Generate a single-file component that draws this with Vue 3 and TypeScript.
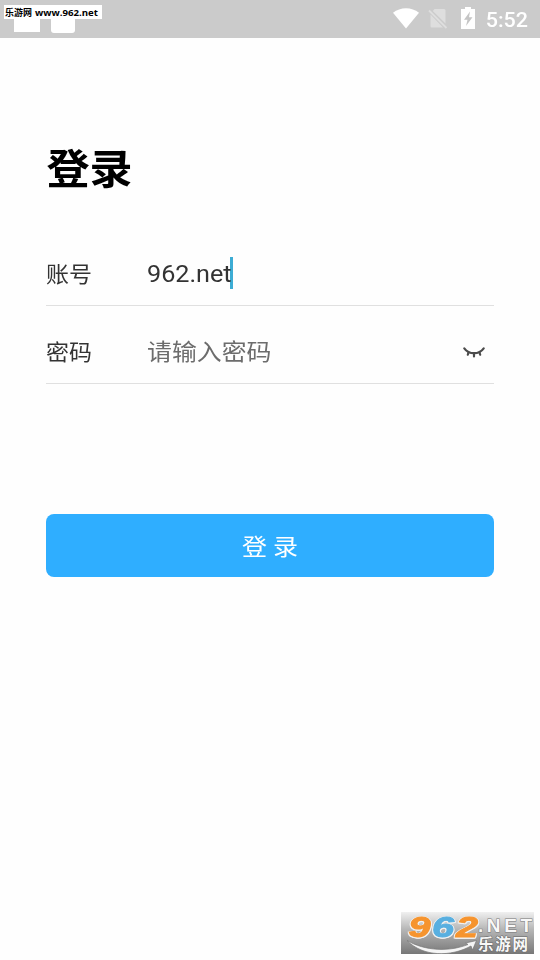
<script setup lang="ts">
import { ref } from 'vue'

const account = ref<string>('962.net')
const time = '5:52'
</script>

<template>
  <div class="screen">
    <header class="status">
      <div class="notices">
        <i class="notice"></i>
        <i class="notice second"></i>
        <span class="source">
          <svg width="98" height="14" viewBox="0 0 98 14">
            <text class="source-cn" x="1" y="11" textLength="27" lengthAdjust="spacingAndGlyphs">乐游网</text>
            <text class="source-url" x="31" y="11" textLength="63" lengthAdjust="spacingAndGlyphs">www.962.net</text>
          </svg>
        </span>
      </div>
      <div class="system">
        <svg class="wifi" width="26" height="21" viewBox="0 0 26 21">
          <path d="M0 4.800C3.800 1.700 8.200 .2 13 .2s9.200 1.500 13 4.600L13 20.600z" fill="#fff" />
        </svg>
        <svg class="sim" width="20" height="21" viewBox="0 0 20 21">
          <path d="M6.500 1H16q1.500 0 1.500 1.500V15.500L4.800 3zM2.500 6.500 15 19.500H4q-1.500 0-1.500-1.500z" fill="#dedede" />
          <path d="M1 2.500 18.500 20" stroke="#dedede" stroke-width="1.800" />
        </svg>
        <svg class="battery" width="14" height="22" viewBox="0 0 14 22">
          <path d="M4 0h6v2h4v20H0V2h4z" fill="#fff" />
          <path d="M9 4.500 3 12.700h3.500L5 19l6.500-8.700H8z" fill="#c5c5c5" />
        </svg>
        <span class="clock">{{ time }}</span>
      </div>
    </header>

    <main class="login">
      <h1>登录</h1>
      <div class="field">
        <span class="label">账号</span>
        <span class="value">{{ account }}</span>
        <i class="caret"></i>
      </div>
      <div class="field">
        <span class="label">密码</span>
        <span class="placeholder">请输入密码</span>
        <svg class="eye" width="22" height="12" viewBox="0 0 22 12" fill="none" stroke="#4b4b4b" stroke-linecap="round">
          <path d="M1.300 2.300C6 8.800 16 8.800 20.700 2.300" stroke-width="2.200" />
          <path d="M5.500 6.500 4.800 8.800M11 7.500v3M16.500 6.500l.7 2.300" stroke-width="2.200" />
        </svg>
      </div>
      <button class="submit" type="button"><span>登 录</span></button>
    </main>

    <footer class="brand">
      <svg width="133" height="42" viewBox="0 0 133 42">
        <defs>
          <linearGradient id="brand-bg" x1="0" y1="0" x2="0" y2="1">
            <stop offset="0" stop-color="#f0f0f0" />
            <stop offset=".4" stop-color="#b8b8b8" />
            <stop offset="1" stop-color="#777" />
          </linearGradient>
        </defs>
        <rect width="133" height="42" fill="url(#brand-bg)" />
        <path d="M6 28.500C22 45 50 45 70 34l1.500 4 4-9.500-11 2.500 2.500 1.500C48 40 24 39 6 28.500z" fill="#f5f5f5" stroke="#777" stroke-width=".7" />
        <g class="digits">
          <text x="7.500" y="24.500" textLength="22" lengthAdjust="spacingAndGlyphs" fill="#f6942e" stroke="#f6942e">9</text>
          <text x="31" y="24.500" textLength="22" lengthAdjust="spacingAndGlyphs" fill="#58afe0" stroke="#58afe0">6</text>
          <text x="55" y="24.500" textLength="22" lengthAdjust="spacingAndGlyphs" fill="#f6942e" stroke="#f6942e">2</text>
        </g>
        <text class="net" x="77" y="19.800" textLength="54">.NET</text>
        <text class="brand-cn" x="77" y="37.500" textLength="50">乐游网</text>
      </svg>
    </footer>
  </div>
</template>

<style>
body {
  margin: 0;
  background: #fefefe;
}
</style>

<style scoped>
.screen {
  display: flex;
  flex-direction: column;
  box-sizing: border-box;
  width: 540px;
  height: 960px;
  overflow: hidden;
  background: #fefefe;
  font-family: Roboto, 'Noto Sans CJK SC', sans-serif;
  color: #333;
}
.status {
  display: flex;
  justify-content: space-between;
  height: 38px;
  background: #cbcbcb;
}
.notices {
  position: relative;
  display: flex;
  align-items: flex-start;
  gap: 11px;
  padding: 10px 0 0 14px;
}
.notice {
  width: 26px;
  height: 22px;
  background: #fff;
}
.notice.second {
  width: 24px;
  height: 23px;
  border-radius: 3px;
}
.source {
  position: absolute;
  left: 4px;
  top: 5px;
  width: 98px;
  height: 14px;
  background: #fff;
}
.source svg {
  display: block;
}
.source-cn {
  font: 700 9px 'Noto Sans CJK SC', sans-serif;
}
.source-url {
  font: 700 9.500px 'Open Sans', sans-serif;
}
.system {
  display: flex;
  align-items: flex-start;
  padding: 8px 12px 0 0;
}
.sim {
  margin-left: 9px;
}
.battery {
  margin: -1px 0 0 13px;
}
.clock {
  margin: 0 0 0 11px;
  font-size: 21.500px;
  font-weight: 500;
  line-height: 24px;
  color: #fff;
  transform: scaleY(.94);
}
.login {
  display: flex;
  flex-direction: column;
  flex: 1;
  padding: 101px 46px 0;
}
h1 {
  margin: 0 0 41px;
  height: 62px;
  padding-left: .5px;
  font-size: 43px;
  line-height: 63px;
  font-weight: 700;
  color: #000;
  transform: scaleY(.95);
}
.field {
  display: flex;
  align-items: center;
  box-sizing: border-box;
  height: 64px;
  margin-bottom: 14px;
  border-bottom: 1px solid #e0e0e0;
}
.label {
  width: 101px;
  margin-top: -2px;
  font-size: 23px;
  transform: scaleY(.94);
}
.value {
  margin-top: 2px;
  font-size: 25.200px;
  transform: scaleY(.93);
}
.caret {
  width: 3px;
  height: 32px;
  margin: -2px 0 0 -2px;
  background: #3cacd4;
}
.placeholder {
  margin-top: -3px;
  font-size: 24.900px;
  color: #6c6c6c;
  transform: scaleY(.92);
}
.eye {
  margin: 0 9px 0 auto;
}
.submit {
  height: 63px;
  margin-top: 116px;
  padding: 0 0 2px;
  border: 0;
  border-radius: 8px;
  background: #2faeff;
  color: #fff;
  font: 25px Roboto, 'Noto Sans CJK SC', sans-serif;
}
.submit span {
  display: inline-block;
  transform: scaleY(.93);
}
.brand {
  display: flex;
  justify-content: flex-end;
  padding: 0 6px 6px 0;
}
.digits {
  font: italic 700 30px 'Liberation Sans', sans-serif;
  stroke-width: 1px;
  filter: drop-shadow(1px 0 0 #f0f0f0) drop-shadow(-1px 0 0 #f0f0f0) drop-shadow(0 1px 0 #f0f0f0);
}
.net {
  font: 700 19px 'Liberation Sans', sans-serif;
  fill: #f8f8f8;
  stroke: #777;
  stroke-width: 1px;
  paint-order: stroke;
}
.brand-cn {
  font: 700 15.500px 'Noto Sans CJK SC', sans-serif;
  fill: #f8f8f8;
  stroke: #666;
  stroke-width: 1px;
  paint-order: stroke;
}
</style>
